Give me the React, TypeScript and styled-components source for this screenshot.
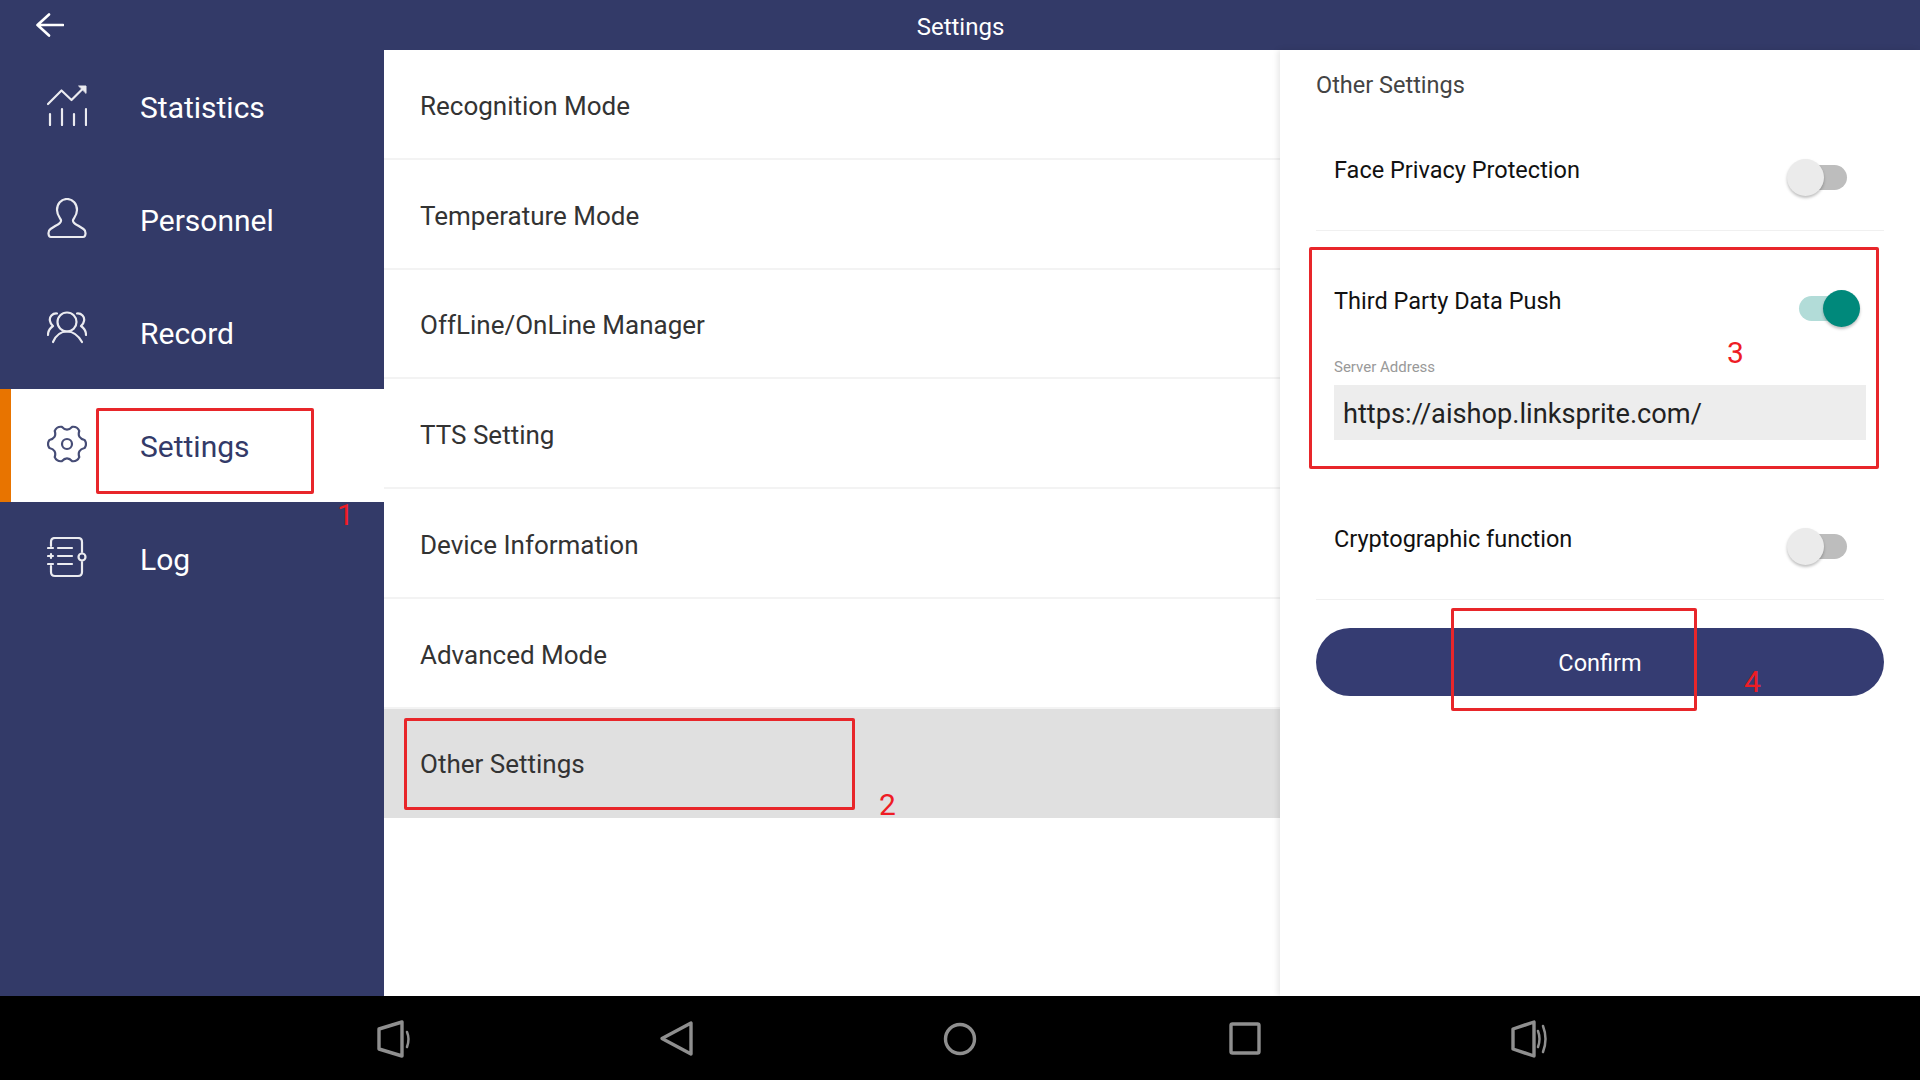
import React from "react";
import styled, { createGlobalStyle } from "styled-components";

const Global = createGlobalStyle`
  html, body { margin: 0; padding: 0; background: #fff; }
  body { font-family: Roboto, "Liberation Sans", sans-serif; }
  * { box-sizing: border-box; }
`;

const Page = styled.div`
  position: relative;
  width: 1920px;
  height: 1080px;
  overflow: hidden;
  display: flex;
  flex-direction: column;
  background: #fff;
`;
const Header = styled.header`
  height: 50px;
  flex: none;
  background: #333a68;
  display: flex;
  align-items: center;
  position: relative;
  padding-left: 36px;
`;
const BackIcon = styled.svg`
  width: 28px;
  height: 24px;
  display: block;
`;
const Title = styled.div`
  flex: 1;
  margin-right: 63px;
  padding-top: 4px;
  text-align: center;
  color: #fff;
  font-size: 24px;
  line-height: 28px;
`;
const Main = styled.div`
  flex: 1;
  display: flex;
  min-height: 0;
`;
const Sidebar = styled.nav`
  width: 384px;
  flex: none;
  background: #333a68;
`;
const NavItem = styled.div<{ $active?: boolean }>`
  height: 113px;
  display: flex;
  align-items: center;
  gap: 53px;
  padding-left: 47px;
  color: ${(p) => (p.$active ? "#333a68" : "#fff")};
  background: ${(p) => (p.$active ? "#fff" : "transparent")};
  box-shadow: ${(p) => (p.$active ? "inset 11px 0 0 #e87400" : "none")};
  font-size: 30px;
  line-height: 36px;
`;
const NavLabel = styled.span`
  padding-top: 2px;
`;
const NavIcon = styled.svg`
  width: 40px;
  height: 41px;
  flex: none;
  display: block;
  margin-top: -2px;
  fill: none;
  stroke: currentColor;
  stroke-width: 2.2;
  stroke-linecap: round;
  stroke-linejoin: round;
  opacity: 0.9;
`;
const List = styled.div`
  flex: 1;
  min-width: 0;
`;
const ListRow = styled.div<{ $active?: boolean }>`
  height: 109.75px;
  display: flex;
  align-items: center;
  padding: 4px 0 0 36px;
  font-size: 26px;
  color: #333;
  background: ${(p) => (p.$active ? "#e0e0e0" : "#fff")};
  border-bottom: 2px solid ${(p) => (p.$active ? "#e0e0e0" : "#f3f3f3")};
`;
const Panel = styled.aside`
  width: 640px;
  flex: none;
  padding: 0 36px;
  background: #fff;
  box-shadow: -2px 0 6px rgba(0, 0, 0, 0.1);
  position: relative;
`;
const PanelTitle = styled.div`
  height: 70px;
  display: flex;
  align-items: center;
  font-size: 23.5px;
  color: #444;
`;
const SwitchRow = styled.div`
  height: 111px;
  display: flex;
  justify-content: space-between;
  align-items: flex-start;
  padding: 36px 37px 0 18px;
  border-bottom: 1px solid #f0f0f0;
`;
const RowLabel = styled.div`
  font-size: 23.5px;
  line-height: 28px;
  color: #111;
`;
const Track = styled.div<{ $on?: boolean }>`
  position: relative;
  width: 47px;
  height: 25px;
  margin-top: 9px;
  border-radius: 13px;
  background: ${(p) => (p.$on ? "#b2dcd8" : "#bdbdbd")};
`;
const Thumb = styled.div<{ $on?: boolean }>`
  position: absolute;
  top: -6px;
  ${(p) => (p.$on ? "right: -14px;" : "left: -13px;")}
  width: 37px;
  height: 37px;
  border-radius: 50%;
  background: ${(p) => (p.$on ? "#00897b" : "#ebebeb")};
  box-shadow: 0 2px 3px rgba(0, 0, 0, 0.25);
`;
const PushSection = styled.div`
  padding: 20px 0 49px;
`;
const PushRow = styled.div`
  display: flex;
  justify-content: space-between;
  align-items: flex-start;
  padding: 36px 38px 0 18px;
  height: 118px;
`;
const FieldLabel = styled.div`
  padding-left: 18px;
  font-size: 15px;
  line-height: 18px;
  color: #999;
  margin-top: -11px;
`;
const FieldValue = styled.div`
  margin: 9px 18px 0;
  height: 55px;
  display: flex;
  align-items: center;
  padding: 2px 0 0 9px;
  background: #ededed;
  font-size: 27.2px;
  color: #222;
`;
const ConfirmButton = styled.button`
  display: block;
  width: 100%;
  height: 68px;
  margin-top: 28px;
  padding: 1px 0 0;
  border: 0;
  border-radius: 34px;
  background: #353c72;
  color: #fff;
  font-family: inherit;
  font-size: 23.5px;
`;
const Footer = styled.footer`
  height: 84px;
  flex: none;
  background: #000;
  display: flex;
  align-items: center;
  justify-content: center;
  gap: 247px;
  padding-top: 2px;
`;
const SysIcon = styled.svg`
  width: 36px;
  height: 38px;
  display: block;
  overflow: visible;
  fill: none;
  stroke: #8f8f8f;
  stroke-width: 3.4;
  stroke-linejoin: round;
  stroke-linecap: round;
`;
const Mark = styled.div<{ $x: number; $y: number; $w: number; $h: number }>`
  position: absolute;
  left: ${(p) => p.$x}px;
  top: ${(p) => p.$y}px;
  width: ${(p) => p.$w}px;
  height: ${(p) => p.$h}px;
  border: 3px solid #e8262a;
  border-radius: 2px;
`;
const MarkNumber = styled.div<{ $x: number; $y: number }>`
  position: absolute;
  left: ${(p) => p.$x}px;
  top: ${(p) => p.$y}px;
  font-size: 30px;
  line-height: 30px;
  font-weight: 400;
  color: #ee1c25;
`;

function gearPath(): string {
  const c = 20;
  const pt = (r: number, deg: number) => {
    const a = (deg * Math.PI) / 180;
    return `${(c + r * Math.cos(a)).toFixed(2)} ${(c + r * Math.sin(a)).toFixed(2)}`;
  };
  let d = "";
  for (let i = 0; i < 6; i++) {
    const a = i * 60;
    d += `${i === 0 ? "M" : "L"}${pt(18, a - 13)} Q${pt(20.5, a)} ${pt(18, a + 13)} Q${pt(11.5, a + 30)} ${pt(18, a + 47)} `;
  }
  return d + "Z";
}

const StatsIcon = () => (
  <NavIcon viewBox="0 0 40 41">
    <path d="M1 19 L14.5 5.5 L24.5 15 L36 3.5" />
    <path d="M32 1 L39 1 L39 8 Z" fill="currentColor" strokeWidth="1" />
    <path d="M3 29 V40 M15 24 V40 M27 29 V40 M39 24 V40" />
  </NavIcon>
);
const PersonIcon = () => (
  <NavIcon viewBox="0 0 40 41">
    <path d="M20 1 C14 1 10 6 10 12 C10 17 13 20 14 22 C14.5 25 12 26 9 27.5 L3.5 31 C0.5 33 1 39 4 39 L36 39 C39 39 39.5 33 36.5 31 L31 27.5 C28 26 25.5 25 26 22 C27 20 30 17 30 12 C30 6 26 1 20 1 Z" />
  </NavIcon>
);
const RecordIcon = () => (
  <NavIcon viewBox="0 0 40 41">
    <circle cx="20" cy="11" r="9.5" />
    <path d="M6 31 C9 24 14 20.5 20 20.5 C26 20.5 31 24 35 31" />
    <path d="M10 2.5 C5.5 2 2 6 3 10 C3.5 13 5 14 6 15 C3 17 1 20 1 24" />
    <path d="M30 2.5 C34.5 2 38 6 37 10 C36.5 13 35 14 34 15 C37 17 39 20 39 24" />
  </NavIcon>
);
const GearIcon = () => (
  <NavIcon viewBox="0 0 40 41">
    <path d={gearPath()} />
    <circle cx="20" cy="20" r="5" />
  </NavIcon>
);
const LogIcon = () => (
  <NavIcon viewBox="0 0 40 41">
    <path d="M4 9 V5 Q4 1 8 1 H31 Q35 1 35 5 V15 M35 25 V35 Q35 39 31 39 H8 Q4 39 4 35 V29 M4 21 V17" />
    <path d="M1 11 H6 M1 19 H6 M1 27 H6" />
    <circle cx="35" cy="20" r="3.5" />
    <path d="M11 11 H25 M11 19 H25 M11 27 H25" />
  </NavIcon>
);

const navItems = [
  { label: "Statistics", icon: <StatsIcon /> },
  { label: "Personnel", icon: <PersonIcon /> },
  { label: "Record", icon: <RecordIcon /> },
  { label: "Settings", icon: <GearIcon />, active: true },
  { label: "Log", icon: <LogIcon /> },
];
const listItems = [
  "Recognition Mode",
  "Temperature Mode",
  "OffLine/OnLine Manager",
  "TTS Setting",
  "Device Information",
  "Advanced Mode",
  "Other Settings",
];

const Toggle = ({ on }: { on?: boolean }) => (
  <Track $on={on}>
    <Thumb $on={on} />
  </Track>
);

export default function App() {
  return (
    <Page>
      <Global />
      <Header>
        <BackIcon viewBox="0 0 28 24" fill="none" stroke="#fff" strokeWidth="2.6" strokeLinecap="round" strokeLinejoin="round">
          <path d="M27 12 H2 M13 1.5 L1.5 12 L13 22.5" />
        </BackIcon>
        <Title>Settings</Title>
      </Header>
      <Main>
        <Sidebar>
          {navItems.map((n) => (
            <NavItem key={n.label} $active={n.active}>
              {n.icon}
              <NavLabel>{n.label}</NavLabel>
            </NavItem>
          ))}
        </Sidebar>
        <List>
          {listItems.map((l) => (
            <ListRow key={l} $active={l === "Other Settings"}>
              {l}
            </ListRow>
          ))}
        </List>
        <Panel>
          <PanelTitle>Other Settings</PanelTitle>
          <SwitchRow>
            <RowLabel>Face Privacy Protection</RowLabel>
            <Toggle />
          </SwitchRow>
          <PushSection>
            <PushRow>
              <RowLabel>Third Party Data Push</RowLabel>
              <Toggle on />
            </PushRow>
            <FieldLabel>Server Address</FieldLabel>
            <FieldValue>https://aishop.linksprite.com/</FieldValue>
          </PushSection>
          <SwitchRow>
            <RowLabel>Cryptographic function</RowLabel>
            <Toggle />
          </SwitchRow>
          <ConfirmButton>Confirm</ConfirmButton>
        </Panel>
      </Main>
      <Footer>
        <SysIcon viewBox="0 0 36 38">
          <path d="M3 9 L26 2 V36 L3 29 Z" />
          <path d="M31 12 Q34 19 31 27" strokeWidth="2.5" />
        </SysIcon>
        <SysIcon viewBox="0 0 36 38">
          <path d="M32 3 V34 L3 18.5 Z" />
        </SysIcon>
        <SysIcon viewBox="0 0 36 38">
          <circle cx="18" cy="19" r="14.5" />
        </SysIcon>
        <SysIcon viewBox="0 0 36 38">
          <rect x="6" y="4" width="28" height="29" rx="1.5" />
        </SysIcon>
        <SysIcon viewBox="0 0 36 38">
          <path d="M5 9 L26 2 V36 L5 29 Z" />
          <path d="M30 11 Q33 19 30 27 M35 6 Q40 19 35 32" strokeWidth="2.5" />
        </SysIcon>
      </Footer>
      <Mark $x={96} $y={408} $w={218} $h={86} />
      <Mark $x={404} $y={718} $w={451} $h={92} />
      <Mark $x={1309} $y={247} $w={570} $h={222} />
      <Mark $x={1451} $y={608} $w={246} $h={103} />
      <MarkNumber $x={337} $y={500}>1</MarkNumber>
      <MarkNumber $x={879} $y={790}>2</MarkNumber>
      <MarkNumber $x={1727} $y={338}>3</MarkNumber>
      <MarkNumber $x={1744} $y={667}>4</MarkNumber>
    </Page>
  );
}
